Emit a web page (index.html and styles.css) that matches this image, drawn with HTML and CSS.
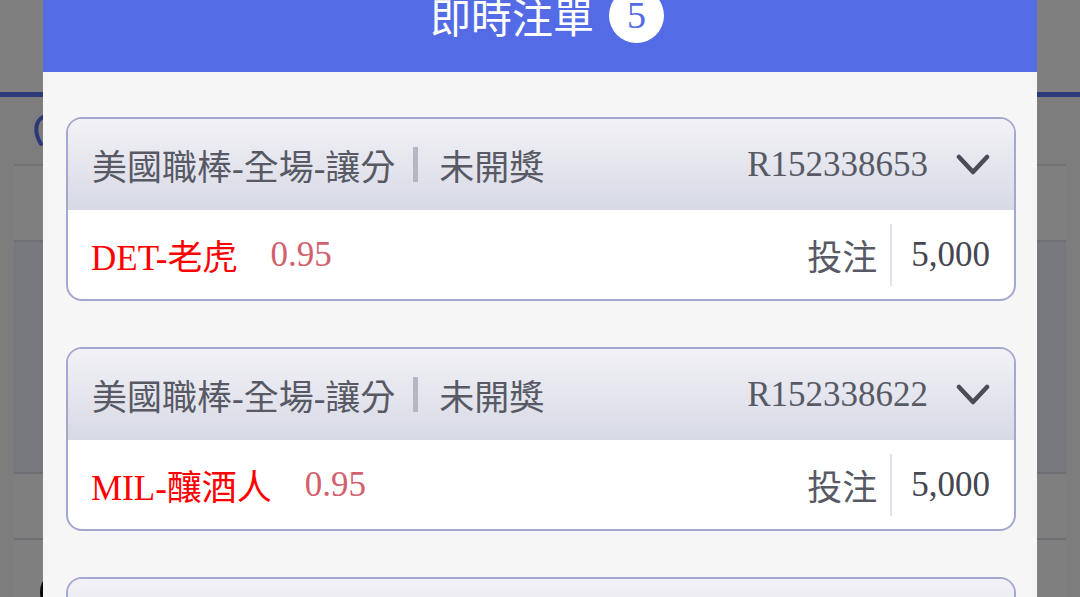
FILE: index.html
```html
<!DOCTYPE html>
<html lang="zh-Hant">
<head>
    <meta charset="UTF-8">
    <meta name="viewport" content="width=device-width, initial-scale=1.0">
    <link rel="stylesheet" href="styles.css">
    <title>即時注單</title>
</head>
<body>
    <div class="page">
        <div class="pageTop"></div>
        <div class="pageLine"></div>
        <div class="pageTools">
            <svg class="toolIcon" viewBox="0 0 30 36" width="30" height="36">
                <path d="M12 4 C4 8 3 20 10 31 M12 4 C16 2 20 4 19 8" fill="none" stroke="#5470f0" stroke-width="4" stroke-linecap="round"/>
            </svg>
        </div>
        <div class="panel">
            <div class="panelRow">Ｙ</div>
            <div class="panelRow blueRow"></div>
            <div class="panelRow small"></div>
            <div class="panelRow small"><span class="dot"></span></div>
        </div>
    </div>

    <div class="overlay"></div>

    <div class="modal">
        <div class="modalHeader">
            <span class="modalTitle">即時注單</span>
            <span class="badge">5</span>
        </div>
        <div class="betList">
            <div class="betCard">
                <div class="betHead">
                    <span class="betType">美國職棒-全場-讓分</span>
                    <span class="bar"></span>
                    <span class="betStatus">未開獎</span>
                    <span class="betNo">R152338653</span>
                    <svg class="chevron" viewBox="0 0 34 22" width="34" height="22">
                        <polyline points="3,3 17,18 31,3" fill="none" stroke="#4b4c56" stroke-width="4.5" stroke-linecap="round" stroke-linejoin="round"/>
                    </svg>
                </div>
                <div class="betBody">
                    <span class="betTeam">DET-老虎</span>
                    <span class="betOdds">0.95</span>
                    <span class="betLabel">投注</span>
                    <span class="vline"></span>
                    <span class="betAmount">5,000</span>
                </div>
            </div>

            <div class="betCard">
                <div class="betHead">
                    <span class="betType">美國職棒-全場-讓分</span>
                    <span class="bar"></span>
                    <span class="betStatus">未開獎</span>
                    <span class="betNo">R152338622</span>
                    <svg class="chevron" viewBox="0 0 34 22" width="34" height="22">
                        <polyline points="3,3 17,18 31,3" fill="none" stroke="#4b4c56" stroke-width="4.5" stroke-linecap="round" stroke-linejoin="round"/>
                    </svg>
                </div>
                <div class="betBody">
                    <span class="betTeam">MIL-釀酒人</span>
                    <span class="betOdds">0.95</span>
                    <span class="betLabel">投注</span>
                    <span class="vline"></span>
                    <span class="betAmount">5,000</span>
                </div>
            </div>

            <div class="betCard">
                <div class="betHead">
                    <span class="betType">美國職棒-全場-讓分</span>
                    <span class="bar"></span>
                    <span class="betStatus">未開獎</span>
                    <span class="betNo">R152338611</span>
                    <svg class="chevron" viewBox="0 0 34 22" width="34" height="22">
                        <polyline points="3,3 17,18 31,3" fill="none" stroke="#4b4c56" stroke-width="4.5" stroke-linecap="round" stroke-linejoin="round"/>
                    </svg>
                </div>
            </div>
        </div>
    </div>
</body>
</html>
```

FILE: styles.css
```css
:root {
    --header-blue: #546be6;
    --card-border: #a3a8d1;
    --text-gray: #575a65;
    --red: #ff0000;
}

body {
    margin: 0;
    height: 597px;
    overflow: hidden;
    font-family: 'Liberation Serif', 'Noto Sans CJK TC', serif;
    background-color: #fafafa;
}

/* page behind the dialog */
.page {
    height: 597px;
}

.pageTop {
    height: 92px;
    background-color: #ffffff;
}

.pageLine {
    height: 5px;
    background-color: #5c74f0;
}

.pageTools {
    height: 67px;
    display: flex;
    align-items: center;
    padding-left: 31px;
}

.panel {
    margin: 0 14px;
    border-top: 2px solid #e0e2ea;
    background-color: #ffffff;
}

.panelRow {
    height: 74px;
    padding-left: 26px;
    display: flex;
    align-items: center;
    color: #333;
    font-size: 22px;
    border-bottom: 2px solid #dcdfe8;
}

.blueRow {
    height: 230px;
    background-color: #eef2fc;
}

.panelRow.small {
    height: 64px;
}

.dot {
    width: 14px;
    height: 26px;
    border-radius: 50%;
    background-color: #111;
    margin-top: 40px;
}

.overlay {
    position: fixed;
    inset: 0;
    background-color: rgba(0, 0, 0, 0.5);
}

/* dialog */
.modal {
    position: absolute;
    left: 43px;
    top: -42px;
    width: 994px;
    height: 700px;
    background-color: #f6f6f6;
}

.modalHeader {
    height: 114px;
    background-color: var(--header-blue);
    display: flex;
    align-items: center;
    justify-content: center;
    gap: 15px;
    padding-left: 14px;
}

.modalTitle {
    font-family: 'Noto Sans CJK TC', sans-serif;
    font-size: 41px;
    line-height: 1;
    color: #ffffff;
}

.badge {
    width: 55px;
    height: 55px;
    border-radius: 50%;
    background-color: #ffffff;
    color: var(--header-blue);
    font-size: 38px;
    display: flex;
    align-items: center;
    justify-content: center;
    line-height: 1;
}

.betList {
    padding: 45px 21px 0 23px;
    display: flex;
    flex-direction: column;
    gap: 46px;
}

.betCard {
    border: 2px solid var(--card-border);
    border-radius: 16px;
    overflow: hidden;
    background-color: #ffffff;
}

.betHead {
    height: 91px;
    display: flex;
    align-items: center;
    padding: 0 24px;
    background: linear-gradient(#f2f2f6, #d7d9e5);
    font-size: 35px;
    color: var(--text-gray);
}

.bar {
    width: 5px;
    height: 35px;
    background-color: #b4b7c3;
    margin: 0 21px 0 18px;
}

.betNo {
    margin-left: auto;
    margin-right: 28px;
}

.chevron {
    display: block;
}

.betBody {
    height: 89px;
    display: flex;
    align-items: center;
    padding: 0 24px 0 23px;
    font-size: 35px;
}

.betTeam {
    color: var(--red);
}

.betOdds {
    color: #d2606d;
    margin-left: 33px;
}

.betLabel {
    margin-left: auto;
    color: var(--text-gray);
}

.vline {
    width: 2px;
    height: 62px;
    background-color: #dde0ee;
    margin: 0 19px 0 13px;
}

.betAmount {
    color: #45464f;
}
```
